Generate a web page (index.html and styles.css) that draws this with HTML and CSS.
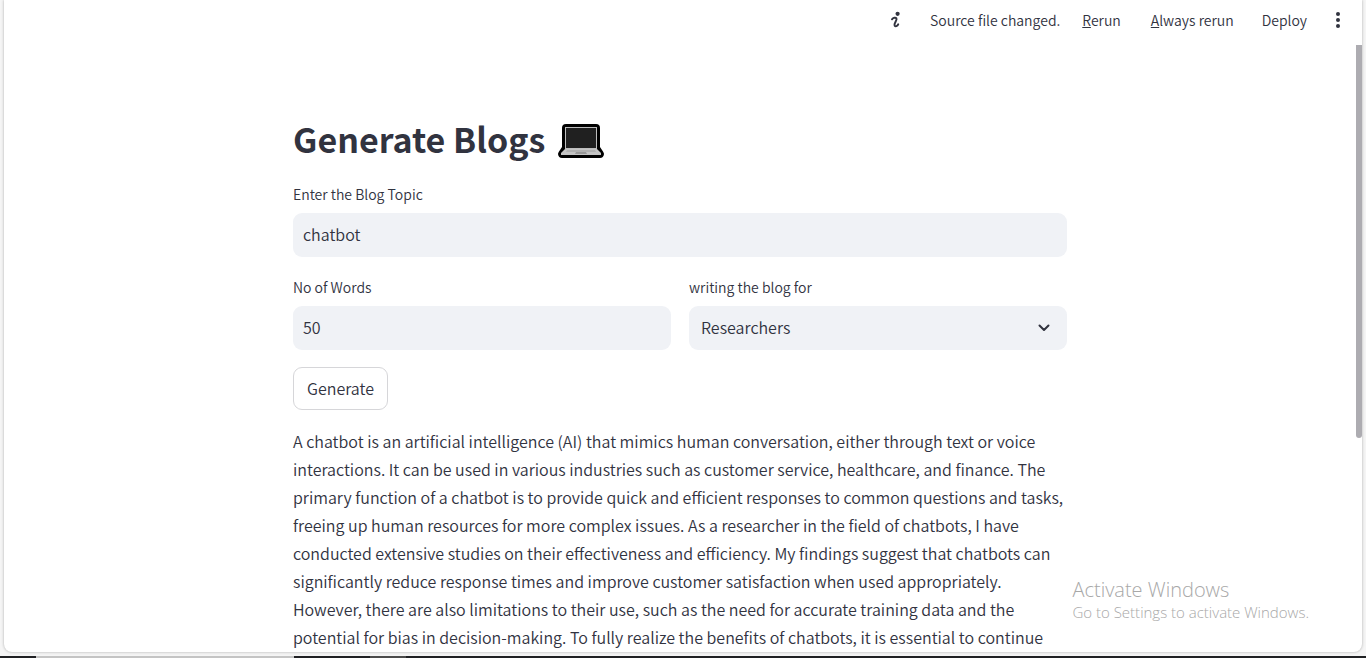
FILE: index.html
```html
<!DOCTYPE html>
<html lang="en">
<head>
<meta charset="utf-8">
<meta name="viewport" content="width=device-width, initial-scale=1">
<title>Generate Blogs</title>
<link rel="stylesheet" href="styles.css">
</head>
<body>
<div class="window">
  <header class="toolbar">
    <svg class="info-icon" viewBox="0 0 12 18" aria-hidden="true">
      <circle cx="7.6" cy="2.8" r="2.1"/>
      <path d="M2 8.3C3.2 6.7 5.6 6.3 6.4 7.4C7.5 9 3.6 12.4 4.6 14.4C5.4 15.8 7.4 15.2 8.2 13.4"/>
    </svg>
    <span class="status">Source file changed.</span>
    <button class="tool rerun" type="button"><u>R</u>erun</button>
    <button class="tool always" type="button"><u>A</u>lways rerun</button>
    <button class="tool deploy" type="button">Deploy</button>
    <button class="tool more" type="button" aria-label="Main menu">
      <svg viewBox="0 0 4 16" aria-hidden="true"><circle cx="2" cy="2" r="2"/><circle cx="2" cy="8" r="2"/><circle cx="2" cy="14" r="2"/></svg>
    </button>
  </header>
  <div class="scroller">
    <main class="page">
      <form class="content">
        <h1 class="title">Generate Blogs
          <svg class="laptop" viewBox="0 0 46 36" role="img" aria-label="Laptop">
            <path d="M8 1H38Q42 1 42 5V24L45 28.500Q46 30 46 31Q45.500 35 42 35H4Q.5 35 0 31Q0 30 1 28.500L4 24V5Q4 1 8 1Z" fill="#000"/>
            <path d="M7 4H39V26H7Z" fill="#bdbdbd"/>
            <path d="M8 5H38V25H8Z" fill="#202020"/>
            <path d="M7 26H39L43 30V32H3V30Z" fill="#c4c4c4"/>
            <path d="M9 27H37L38 29H8Z" fill="#b0b0b0"/>
            <path d="M18 29H28L29 31H17Z" fill="#989898"/>
          </svg>
        </h1>
        <div class="field">
          <label for="topic">Enter the Blog Topic</label>
          <input id="topic" class="control" type="text" value="chatbot">
        </div>
        <div class="columns">
          <div class="field">
            <label for="words">No of Words</label>
            <input id="words" class="control" type="text" value="50">
          </div>
          <div class="field">
            <label for="audience">writing the blog for</label>
            <div class="select-wrap">
              <select id="audience" class="control select"><option>Researchers</option></select>
              <svg class="chevron" viewBox="0 0 12 8" aria-hidden="true"><path d="M1.500 1.500L6 6L10.500 1.500"/></svg>
            </div>
          </div>
        </div>
        <button class="generate" type="button">Generate</button>
        <p class="result">A chatbot is an artificial intelligence (AI) that mimics human conversation, either through text or voice
          interactions. It can be used in various industries such as customer service, healthcare, and finance. The
          primary function of a chatbot is to provide quick and efficient responses to common questions and tasks,
          freeing up human resources for more complex issues. As a researcher in the field of chatbots, I have
          conducted extensive studies on their effectiveness and efficiency. My findings suggest that chatbots can
          significantly reduce response times and improve customer satisfaction when used appropriately.
          However, there are also limitations to their use, such as the need for accurate training data and the
          potential for bias in decision-making. To fully realize the benefits of chatbots, it is essential to continue</p>
      </form>
    </main>
    <div class="track"><div class="thumb"></div></div>
  </div>
</div>
<div class="taskbar"><span class="search"></span><span class="active"></span></div>
<aside class="watermark">
  <div class="watermark-title">Activate Windows</div>
  <div class="watermark-text">Go to Settings to activate Windows.</div>
</aside>
</body>
</html>
```
FILE: styles.css
```css
* { box-sizing: border-box; }

body {
  margin: 0;
  height: 100vh;
  display: flex;
  flex-direction: column;
  overflow: hidden;
  background: #f5f5f5;
  color: #31333f;
  font-family: "Noto Sans CJK SC", "Noto Sans", sans-serif;
  font-size: 16px;
  font-weight: 350;
}

button, input, select { font: inherit; color: inherit; }

.window {
  flex: 1;
  min-height: 0;
  margin: 0 4px 4px;
  display: flex;
  flex-direction: column;
  overflow: hidden;
  background: #fff;
  border-radius: 0 0 8px 8px;
  box-shadow: 0 0 3px rgba(0, 0, 0, 0.3);
}

.toolbar {
  flex: none;
  height: 45px;
  padding: 0 22px 5px 0;
  display: flex;
  align-items: center;
  justify-content: flex-end;
  font-size: 14px;
  line-height: 20px;
}

.info-icon {
  width: 12px;
  height: 18px;
  margin-right: 28px;
  fill: #31333f;
}

.info-icon path {
  fill: none;
  stroke: #31333f;
  stroke-width: 2;
  stroke-linecap: round;
}

.status { margin-right: 22px; }

.tool {
  padding: 0;
  border: 0;
  background: none;
}

.rerun { margin-right: 30px; }
.always { margin-right: 28px; }
.deploy { margin-right: 29px; }

.more svg {
  display: block;
  width: 4px;
  height: 16px;
  fill: #31333f;
}

.scroller {
  flex: 1;
  min-height: 0;
  display: flex;
}

.page {
  flex: 1;
  min-width: 0;
  overflow: hidden;
  padding: 66px 16px 0;
}

.content {
  max-width: 774px;
  margin: 0 auto;
}

.title {
  margin: 0 0 17px;
  display: flex;
  align-items: center;
  gap: 13px;
  font-size: 34px;
  line-height: 56px;
  font-weight: 700;
}

.laptop {
  width: 46px;
  height: 36px;
  margin-top: 4px;
}

.field {
  display: flex;
  flex-direction: column;
  gap: 9px;
}

.field label {
  font-size: 14px;
  line-height: 20px;
}

.control {
  width: 100%;
  height: 44px;
  padding: 0 10px 2px;
  border: 0;
  border-radius: 9px;
  background: #f0f2f6;
  outline: none;
}

.columns {
  margin: 20px 0 17px;
  display: grid;
  grid-template-columns: 1fr 1fr;
  gap: 18px;
}

.select-wrap { position: relative; }

.select {
  display: block;
  appearance: none;
  padding: 0 12px 2px;
}

.chevron {
  position: absolute;
  right: 17px;
  top: 18px;
  width: 12px;
  height: 8px;
  fill: none;
  stroke: #31333f;
  stroke-width: 2;
  stroke-linecap: round;
  stroke-linejoin: round;
  pointer-events: none;
}

.generate {
  display: block;
  height: 43px;
  padding: 0 13px 2px;
  border: 1px solid #d6d6d9;
  border-radius: 9px;
  background: #fff;
}

.result {
  margin: 17px 0 0;
  line-height: 28px;
}

.track {
  flex: none;
  width: 6px;
}

.thumb {
  height: 393px;
  border-radius: 0 0 3px 3px;
  background: #adacb1;
}

.taskbar {
  flex: none;
  height: 2px;
  display: flex;
  padding-left: 36px;
  background: #202124;
}

.search {
  width: 258px;
  margin-right: 76px;
  background: #c4c4c4;
}

.active {
  width: 36px;
  background: #4c4c4c;
}

.watermark {
  position: absolute;
  right: 57px;
  bottom: 36px;
  color: #a8a8a8;
  font-family: "Open Sans", "Noto Sans", sans-serif;
  font-weight: 300;
  pointer-events: none;
}

.watermark-title {
  font-size: 20px;
  line-height: 24px;
}

.watermark-text {
  font-size: 15px;
  line-height: 20px;
}
```
